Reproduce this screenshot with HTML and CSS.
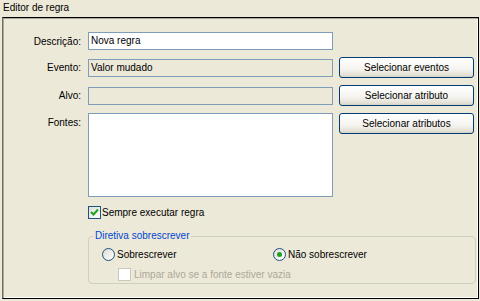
FILE: index.html
```html
<!DOCTYPE html>
<html lang="pt">
<head>
    <meta charset="UTF-8">
    <title>Editor de regra</title>
    <link rel="stylesheet" href="styles.css">
</head>
<body>
    <!-- título da janela -->
    <div class="title">Editor de regra</div>

    <!-- painel principal -->
    <div class="panel">
        <div class="form">
            <div class="lbl">Descrição:</div>
            <div class="edit">Nova regra</div>
            <div></div>

            <div class="lbl">Evento:</div>
            <div class="edit off">Valor mudado</div>
            <div class="btn">Selecionar eventos</div>

            <div class="lbl">Alvo:</div>
            <div class="edit off"></div>
            <div class="btn">Selecionar atributo</div>

            <div class="lbl lbl-top">Fontes:</div>
            <div class="edit area"></div>
            <div class="btn btn-top">Selecionar atributos</div>
        </div>

        <div class="check-row">
            <span class="check on">
                <svg width="11" height="11" viewBox="0 0 11 11"><path d="M2 5 L4.5 7.5 L9 2.5" fill="none" stroke="#21a121" stroke-width="2"/></svg>
            </span>
            <span>Sempre executar regra</span>
        </div>

        <!-- grupo da diretiva -->
        <fieldset class="group">
            <legend>Diretiva sobrescrever</legend>
            <div class="radios">
                <div class="opt"><span class="radio"></span><span>Sobrescrever</span></div>
                <div class="opt"><span class="radio sel"></span><span>Não sobrescrever</span></div>
            </div>
            <div class="check-row sub">
                <span class="check dis"></span>
                <span class="dis-text">Limpar alvo se a fonte estiver vazia</span>
            </div>
        </fieldset>
    </div>
</body>
</html>
```

FILE: styles.css
```css
/* estilo XP do editor de regra */
body {
    margin: 0;
    width: 480px;
    height: 301px;
    overflow: hidden;
    background-color: #ece9d8;
    font-family: "Liberation Sans", Arial, sans-serif;
    font-size: 10px;
    color: #000;
}

.title {
    height: 17px;
    line-height: 15px;
    padding-left: 3px;
}

.panel {
    box-sizing: border-box;
    margin-left: 2px;
    width: 477px;
    height: 282px;
    border: 1px solid #000;
    border-left-color: #716f64;
    box-shadow: inset 1px 1px #aca899, inset -1px -1px #fff;
    padding: 14px 0 0 0;
}

.form {
    display: grid;
    grid-template-columns: 79px 245px 135px;
    grid-template-rows: 18px 21px 21px 84px;
    column-gap: 6px;
    row-gap: 7px;
}

.lbl {
    align-self: center;
    text-align: right;
    padding-right: 1px;
}

.lbl-top {
    align-self: start;
    padding-top: 4px;
}

.edit {
    box-sizing: border-box;
    height: 18px;
    align-self: center;
    border: 1px solid #7f9db9;
    background-color: #fff;
    padding-left: 2px;
    line-height: 16px;
}

.edit.off {
    background-color: #ece9d8;
}

.edit.area {
    height: 84px;
    align-self: start;
}

.btn {
    box-sizing: border-box;
    height: 21px;
    border: 1px solid #003c74;
    border-radius: 3px;
    background: linear-gradient(#ffffff, #f4f3ee 60%, #e3e0d4 90%, #d6d0c5);
    text-align: center;
    line-height: 19px;
}

.btn-top {
    align-self: start;
}

.check-row {
    display: flex;
    align-items: center;
    height: 13px;
    margin: 9px 0 0 85px;
}

.check {
    box-sizing: border-box;
    width: 13px;
    height: 13px;
    margin-right: 1px;
    border: 1px solid #1c5180;
    background: linear-gradient(135deg, #dcdcd7, #ffffff);
    display: flex;
    align-items: center;
    justify-content: center;
}

.check.dis {
    border-color: #cac8bb;
    background: #fff;
    margin-right: 3px;
}

.dis-text {
    color: #aca899;
}

.group {
    margin: 11px 2px 0 85px;
    padding: 6px 4px 2px 4px;
    border: 1px solid #d0d0bf;
    border-radius: 4px;
}

.group legend {
    padding: 0 2px;
    line-height: 12px;
    color: #0046d5;
}

.radios {
    display: grid;
    grid-template-columns: 171px auto;
    padding-left: 9px;
}

.opt {
    display: flex;
    align-items: center;
    height: 13px;
}

.radio {
    box-sizing: border-box;
    width: 13px;
    height: 13px;
    margin-right: 2px;
    border: 1px solid #1c5180;
    border-radius: 50%;
    background: linear-gradient(135deg, #dcdcd7, #ffffff);
    display: flex;
    align-items: center;
    justify-content: center;
}

.radio.sel::after {
    content: "";
    width: 5px;
    height: 5px;
    border-radius: 50%;
    background-color: #21a121;
}

.check-row.sub {
    margin: 7px 0 0 25px;
}
```
